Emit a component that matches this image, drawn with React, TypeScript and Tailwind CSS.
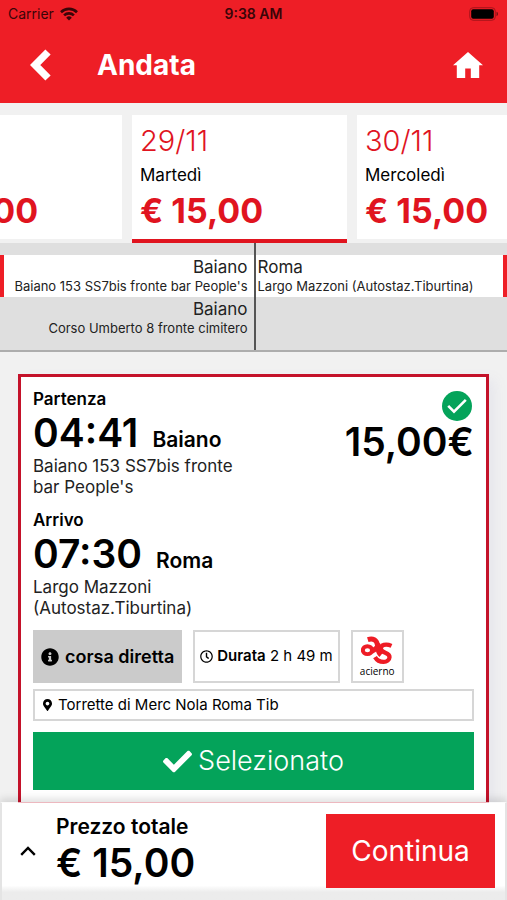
import { useEffect, useRef } from "react";
import { FaCheck, FaInfoCircle, FaMapMarkerAlt, FaRegClock } from "react-icons/fa";

const days = [
  { id: "prev", price: "€ 15,00" },
  { id: "current", date: "29/11", weekday: "Martedì", price: "€ 15,00", selected: true },
  { id: "next", date: "30/11", weekday: "Mercoledì", price: "€ 15,00" },
];

const departures = [
  { city: "Baiano", stop: "Baiano 153 SS7bis fronte bar People's", active: true },
  { city: "Baiano", stop: "Corso Umberto 8 fronte cimitero", active: false },
];

const arrivals = [{ city: "Roma", stop: "Largo Mazzoni (Autostaz.Tiburtina)" }];

const legs = [
  { label: "Partenza", time: "04:41", city: "Baiano", stop: "Baiano 153 SS7bis fronte bar People's" },
  { label: "Arrivo", time: "07:30", city: "Roma", stop: "Largo Mazzoni (Autostaz.Tiburtina)" },
];

const WifiIcon = () => (
  <svg viewBox="0 0 18 14" className="w-[18px] h-[14px]" fill="none" stroke="currentColor" strokeWidth="2.6">
    <path d="M1 5.2a11.4 11.4 0 0 1 16 0" />
    <path d="M4.1 8.4a7 7 0 0 1 9.8 0" />
    <path d="M9 13.6 6.2 10.7a4 4 0 0 1 5.6 0Z" fill="currentColor" stroke="none" />
  </svg>
);

const BatteryIcon = () => (
  <svg viewBox="0 0 30 14" className="w-[30px] h-[14px]">
    <rect x="0.7" y="0.7" width="25.6" height="12.6" rx="3.5" fill="none" stroke="#a8141b" strokeWidth="1" />
    <rect x="2.2" y="2.2" width="22.6" height="9.6" rx="2" fill="#000" />
    <path d="M27.6 4.8c1.6.5 1.6 3.9 0 4.4Z" fill="#5c0c10" />
  </svg>
);

const BackIcon = () => (
  <svg viewBox="0 0 21 32" className="w-[21px] h-8" fill="none" stroke="currentColor" strokeWidth="7.4">
    <path d="M18 3 5.2 16l12.8 13" />
  </svg>
);

const HomeIcon = () => (
  <svg viewBox="0 0 30 26" className="w-[30px] h-[26px]" fill="currentColor">
    <path d="M15 0 30 13.2h-3.8V26h-8.4v-9.4h-5.6V26H3.8V13.2H0Z" />
  </svg>
);

const AciernoLogo = () => (
  <svg viewBox="0 0 96 88" className="w-8 h-[29px]" fill="none" stroke="#ee1c25" strokeWidth="15">
    <path d="M20 11C36 6 47 12 49 26C51 40 50 50 60 58" />
    <ellipse cx="19" cy="43" rx="14" ry="12" strokeWidth="12" />
    <path d="M33 46C44 42 48 30 58 29" />
    <path d="M92 30C76 23 57 26 60 40C62 53 87 49 86 64C85 83 54 84 42 64" strokeWidth="13" />
  </svg>
);

const Header = () => (
  <header className="bg-[#ee1e26]">
    <div className="grid grid-cols-3 items-center h-7 px-2 text-[#3a0508]">
      <div className="flex items-center gap-1.5 text-sm">
        <span>Carrier</span>
        <WifiIcon />
      </div>
      <span className="text-center text-sm font-semibold">9:38 AM</span>
      <div className="flex justify-end">
        <BatteryIcon />
      </div>
    </div>
    <div className="flex items-center h-[75px] pb-0.5 pl-[30px] pr-6 text-white">
      <button aria-label="Indietro" className="w-[67px]">
        <BackIcon />
      </button>
      <h1 className="flex-1 text-[28px] font-bold">Andata</h1>
      <a href="#home" aria-label="Home">
        <HomeIcon />
      </a>
    </div>
  </header>
);

const DayStrip = () => {
  const strip = useRef<HTMLElement>(null);

  // start with the selected day in view
  useEffect(() => {
    if (strip.current) strip.current.scrollLeft = 93;
  }, []);

  return (
    <nav ref={strip} className="flex gap-[10px] pt-3 overflow-x-auto [scrollbar-width:none]">
      {days.map((day) => (
        <button
          key={day.id}
          className={`flex flex-col justify-end w-[215px] shrink-0 bg-white border-b-4 px-2 pt-2 text-left ${
            day.selected ? "border-[#e0141f]" : "border-[#f1f1f1]"
          }`}
        >
          {day.date && <span className="text-[29px] leading-9 font-light text-[#e0141f]">{day.date}</span>}
          {day.weekday && <span className="text-[17px] leading-8">{day.weekday}</span>}
          <span className="text-[34px] leading-10 pb-2 font-bold text-[#e0141f]">{day.price}</span>
        </button>
      ))}
    </nav>
  );
};

const StopsBoard = () => (
  <section className="grid grid-cols-2 border-b-2 border-[#adadad] bg-[#dfdfdf] text-[#222]">
    <div className="pt-3 pb-[11px] text-right">
      {departures.map((item) => (
        <div
          key={item.stop}
          className={`border-l-4 pr-1.5 pb-1 ${item.active ? "bg-white border-[#ee1e26]" : "border-[#dfdfdf]"}`}
        >
          <p className="text-[17px] leading-6">{item.city}</p>
          <p className="text-[13px] leading-[14px] whitespace-nowrap">{item.stop}</p>
        </div>
      ))}
    </div>
    <div className="border-l-2 border-[#555] pt-3">
      {arrivals.map((item) => (
        <div key={item.stop} className="border-r-4 border-[#ee1e26] bg-white pl-0.5 pb-1">
          <p className="text-[17px] leading-6">{item.city}</p>
          <p className="text-[13px] leading-[14px] whitespace-nowrap">{item.stop}</p>
        </div>
      ))}
    </div>
  </section>
);

const TripCard = () => (
  <article className="border-3 border-[#c4122a] bg-white px-3 pt-[11px] pb-3 shadow-[6px_6px_12px_#e6e6ec]">
    <div className="flex justify-between">
      <div className="w-[212px]">
        {legs.map((leg) => (
          <div key={leg.label} className="pb-[11px]">
            <p className="text-[17px] leading-[22px] font-semibold">{leg.label}</p>
            <p className="flex items-baseline gap-3.5 whitespace-nowrap font-semibold">
              <span className="text-[39px] leading-[46px]">{leg.time}</span>
              <span className="text-[21px] leading-6">{leg.city}</span>
            </p>
            <p className="text-[17px] leading-[21px] text-[#222]">{leg.stop}</p>
          </div>
        ))}
      </div>
      <div className="flex flex-col items-end">
        <span className="flex items-center justify-center size-[30px] mt-[3px] mr-0.5 rounded-full bg-[#04a35a] text-white">
          <svg viewBox="0 0 20 16" className="w-5 h-4" fill="none" stroke="currentColor" strokeWidth="2.6">
            <path d="M1.2 7.8 7 13.6 18.8 1.8" />
          </svg>
        </span>
        <p className="text-[39px] leading-[42px] font-semibold">15,00€</p>
      </div>
    </div>

    <div className="flex gap-[11px]">
      <div className="flex items-center gap-1.5 h-[53px] px-2 bg-[#cbcbcb]">
        <FaInfoCircle className="size-[18px]" />
        <span className="text-lg font-semibold">corsa diretta</span>
      </div>
      <div className="flex items-center gap-1 h-[53px] px-[5px] border-2 border-[#d6d6d6] text-[15px]">
        <FaRegClock className="size-[13px]" />
        <p>
          <b className="font-semibold">Durata</b> 2 h 49 m
        </p>
      </div>
      <div className="flex flex-col items-center justify-center w-[53px] h-[53px] border-2 border-[#d6d6d6]">
        <AciernoLogo />
        <span className="font-['Open_Sans',sans-serif] text-[10px] leading-3">acierno</span>
      </div>
    </div>

    <div className="flex items-center gap-1.5 h-8 mt-1.5 px-2 border-2 border-[#d6d6d6] text-[15px]">
      <FaMapMarkerAlt className="w-[9px] h-3" />
      <span>Torrette di Merc Nola Roma Tib</span>
    </div>

    <button className="flex items-center justify-center gap-1.5 w-full h-[58px] mt-[11px] bg-[#04a35a] text-white">
      <FaCheck className="size-[29px]" />
      <span className="text-[27px] font-light">Selezionato</span>
    </button>
  </article>
);

const TotalBar = () => (
  <footer className="sticky bottom-0 flex items-center h-[98px] border-t border-x-2 border-x-[#e4e4e4] border-t-white/70 bg-clip-padding bg-linear-to-b from-white from-85% to-[#ececec] to-92% shadow-[0_-3px_8px_#00000022] pl-[18px] pr-[10px] pb-0.5">
    <button aria-label="Dettagli prezzo" className="w-9">
      <svg viewBox="0 0 16 10" className="w-4 h-[10px]" fill="none" stroke="currentColor" strokeWidth="2.4">
        <path d="M1.2 8.8 8 2l6.8 6.8" />
      </svg>
    </button>
    <div className="flex-1">
      <p className="text-[21px] leading-6 font-semibold">Prezzo totale</p>
      <p className="text-[39px] leading-[48px] font-semibold">€ 15,00</p>
    </div>
    <button className="w-[169px] h-[74px] bg-[#ee1e26] text-[28px] text-white">Continua</button>
  </footer>
);

const App = () => {
  return (
    <div className="min-h-screen flex flex-col bg-[#f1f1f1] font-[Inter,'Liberation_Sans',sans-serif] text-black">
      <Header />
      <DayStrip />
      <StopsBoard />
      {/* the card's lower edge slides under the total bar */}
      <main className="flex-1 pt-[22px] px-[18px] -mb-1">
        <TripCard />
      </main>
      <TotalBar />
    </div>
  );
};

export default App;
